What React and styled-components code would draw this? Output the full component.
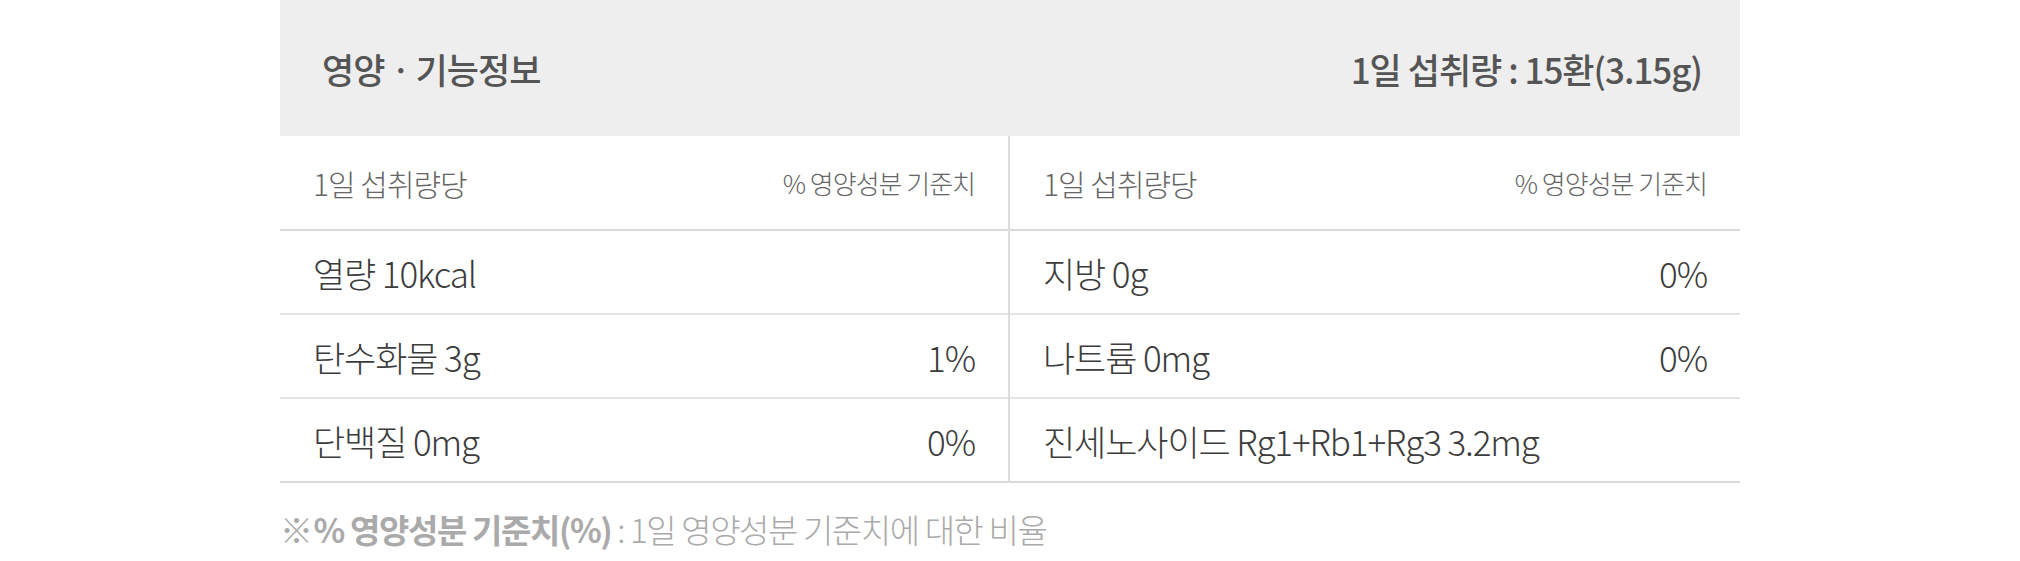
import React from "react";
import styled, { createGlobalStyle } from "styled-components";

const GlobalStyle = createGlobalStyle`
  html, body {
    margin: 0;
    padding: 0;
    background: #ffffff;
  }
  body {
    font-family: "Noto Sans CJK KR", "Noto Sans", sans-serif;
  }
`;

const Wrapper = styled.section`
  width: 1460px;
  margin: 0 auto;
`;

const Header = styled.div`
  display: flex;
  align-items: center;
  justify-content: space-between;
  height: 136px;
  padding: 0 38px 0 42px;
  background: #eeeeee;
  color: #555555;
  font-size: 35px;
  font-weight: 500;
  letter-spacing: -1px;
`;

const Table = styled.div`
  display: grid;
  grid-template-columns: 1fr 1fr;
  border-bottom: 2px solid #d9d9d9;
`;

const Column = styled.div`
  display: flex;
  flex-direction: column;
  border-right: ${(p) => (p.$divider ? "2px solid #dddddd" : "none")};
`;

const HeadRow = styled.div`
  display: flex;
  align-items: center;
  justify-content: space-between;
  height: 93px;
  padding: 0 33px;
  border-bottom: 2px solid #d9d9d9;
  color: #666666;
  font-weight: 300;
`;

const HeadLeft = styled.span`
  font-size: 30px;
  letter-spacing: -1px;
`;

const HeadRight = styled.span`
  font-size: 26px;
  letter-spacing: -1px;
`;

const Row = styled.div`
  display: flex;
  align-items: center;
  justify-content: space-between;
  height: 82px;
  padding: 0 33px;
  border-top: ${(p) => (p.$first ? "none" : "2px solid #e4e4e4")};
  color: #3c3c3c;
  font-size: 35px;
  font-weight: 300;
  letter-spacing: -1.1px;
`;

const Note = styled.p`
  margin: 25px 0 0;
  color: #aaaaaa;
  font-size: 33px;
  font-weight: 300;
  line-height: 42px;
  letter-spacing: -1.4px;

  strong {
    margin-left: 2px;
    font-weight: 700;
  }
`;

const left = [
  { name: "열량 10kcal", pct: "" },
  { name: "탄수화물 3g", pct: "1%" },
  { name: "단백질 0mg", pct: "0%" },
];

const right = [
  { name: "지방 0g", pct: "0%" },
  { name: "나트륨 0mg", pct: "0%" },
  { name: "진세노사이드 Rg1+Rb1+Rg3 3.2mg", pct: "" },
];

function NutritionColumn({ items, divider }) {
  return (
    <Column $divider={divider}>
      <HeadRow>
        <HeadLeft>1일 섭취량당</HeadLeft>
        <HeadRight>% 영양성분 기준치</HeadRight>
      </HeadRow>
      {items.map((item, i) => (
        <Row key={item.name} $first={i === 0}>
          <span>{item.name}</span>
          <span>{item.pct}</span>
        </Row>
      ))}
    </Column>
  );
}

export default function App() {
  return (
    <>
      <GlobalStyle />
      <Wrapper>
        <Header>
          <span>영양ㆍ기능정보</span>
          <span>1일 섭취량 : 15환(3.15g)</span>
        </Header>
        <Table>
          <NutritionColumn items={left} divider />
          <NutritionColumn items={right} />
        </Table>
        <Note>
          ※<strong>% 영양성분 기준치(%)</strong> : 1일 영양성분 기준치에 대한 비율
        </Note>
      </Wrapper>
    </>
  );
}
